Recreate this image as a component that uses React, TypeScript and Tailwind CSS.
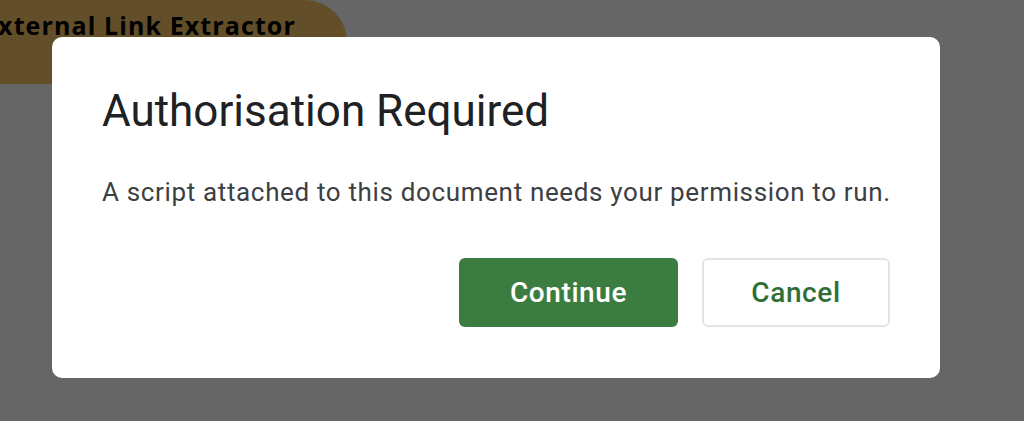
import React from 'react';

const AuthDialog: React.FC = () => {
  return (
    <div className="absolute left-[52px] top-[37px] w-[888px] h-[341px] bg-white rounded-[10px] px-[50px] pt-[48px]">
      <h1 className="text-[44px] leading-[52px] text-[#202124] font-normal">
        Authorisation Required
      </h1>
      <p className="mt-[39px] text-[26px] leading-[32px] text-[#3c4043] tracking-[0.65px] whitespace-nowrap">
        A script attached to this document needs your permission to run.
      </p>
      <div className="mt-[50px] flex justify-end gap-[24px]">
        <button className="w-[219px] h-[69px] rounded-[6px] bg-[#3b7d41] text-white text-[28px] font-medium tracking-[0.6px]">
          Continue
        </button>
        <button className="w-[188px] h-[69px] rounded-[6px] bg-white border-2 border-[#e3e4e8] text-[#2f6f37] text-[28px] font-medium tracking-[0.6px]">
          Cancel
        </button>
      </div>
    </div>
  );
};

export default function App() {
  return (
    <div className="relative w-[1024px] h-[421px] overflow-hidden bg-[#666666] font-['Roboto',sans-serif]">
      <div className="w-[364px] h-[84px] -ml-[17px] bg-[#624e29] rounded-r-[42px]">
        <span className="block pt-[6px] text-[25px] leading-[38px] font-bold text-black font-['Open_Sans',sans-serif] tracking-[1.1px] whitespace-nowrap">
          External Link Extractor
        </span>
      </div>
      <AuthDialog />
    </div>
  );
}
